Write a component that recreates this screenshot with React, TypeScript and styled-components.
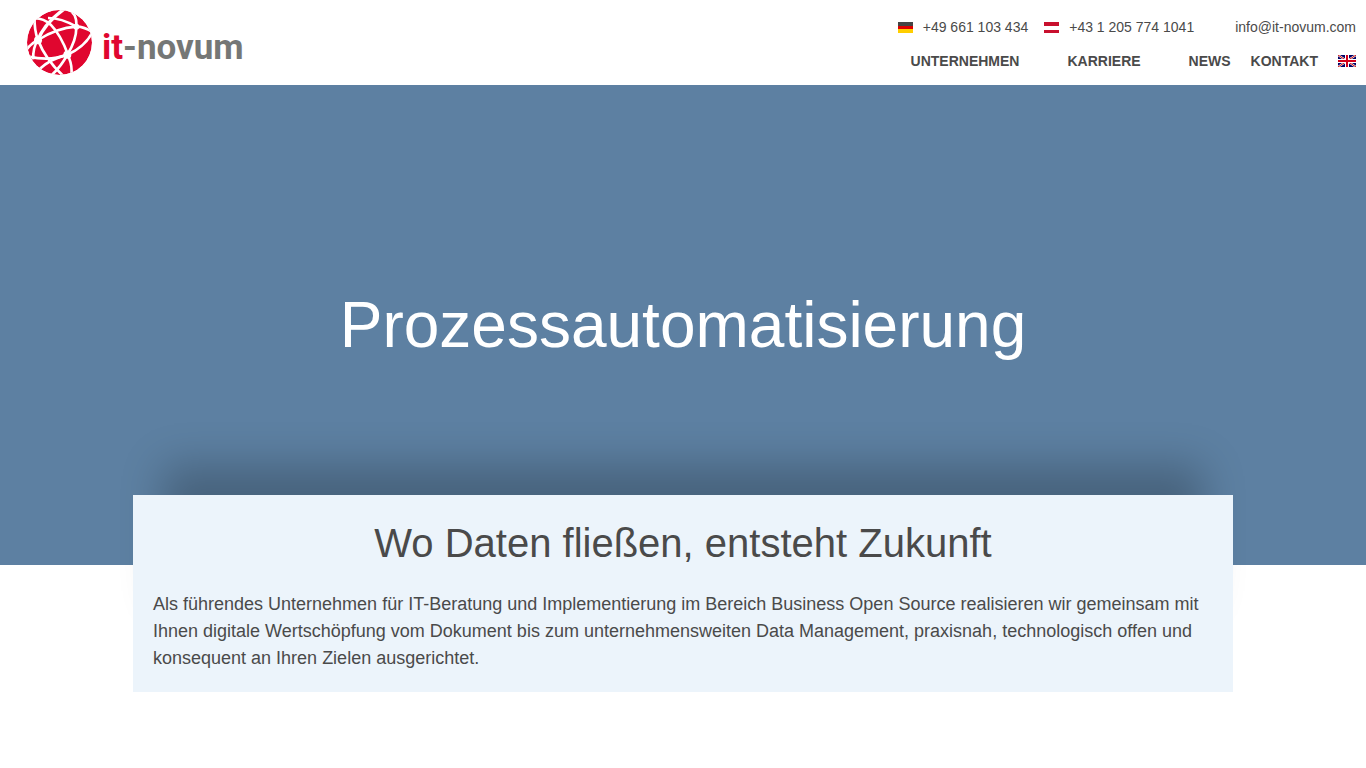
import React from "react";
import styled, { createGlobalStyle } from "styled-components";

const GlobalStyle = createGlobalStyle`
  *, *::before, *::after { box-sizing: border-box; }
  body {
    margin: 0;
    background: #fff;
    color: #4a4a4a;
    font-family: "Liberation Sans", Arial, sans-serif;
    font-size: 18px;
    line-height: 27px;
  }
`;

const Header = styled.header`
  display: flex;
  justify-content: space-between;
  height: 85px;
  padding: 10px 10px 0 27px;
`;

const Logo = styled.a`
  display: flex;
  align-items: flex-start;
  gap: 10px;
  height: 65px;
  text-decoration: none;
`;

const Wordmark = styled.span`
  color: #757776;
  font-family: Roboto, "Liberation Sans", sans-serif;
  font-size: 35px;
  font-weight: 700;
  line-height: 76px;
`;

const WordmarkAccent = styled.span`
  color: #e0062f;
`;

const HeaderLinks = styled.div`
  display: flex;
  flex-direction: column;
  align-items: flex-end;
`;

const LinkRow = styled.div`
  display: flex;
  align-items: center;
  height: 34px;
`;

const NavRow = styled(LinkRow).attrs({ as: "nav" })``;

const ContactLink = styled.a<{ $gap?: number }>`
  display: flex;
  align-items: center;
  gap: 10px;
  margin-left: ${({ $gap = 0 }) => $gap}px;
  color: inherit;
  font-size: 14px;
  text-decoration: none;
`;

const NavLink = styled(ContactLink)`
  font-weight: 700;
`;

const Hero = styled.section`
  display: flex;
  align-items: center;
  justify-content: center;
  height: 480px;
  background: #5d80a2;
`;

const HeroTitle = styled.h1`
  margin: 0;
  color: #fff;
  font-size: 64px;
  font-weight: 400;
  line-height: 78px;
`;

const Intro = styled.section`
  position: relative;
  max-width: 1100px;
  margin: -70px auto 0;
  padding: 20px;
  background: #ecf4fb;
  box-shadow: 0 -60px 40px -30px rgba(0, 0, 0, 0.23);
`;

const IntroTitle = styled.h2`
  margin: 0 0 20px;
  font-size: 40px;
  font-weight: 400;
  line-height: 56px;
  text-align: center;
`;

const IntroText = styled.p`
  margin: 0;
`;

const Globe = () => (
  <svg width="65" height="65" viewBox="21 18 195 195" aria-hidden="true">
    <clipPath id="globe">
      <circle cx="118.500" cy="115.500" r="97.500" />
    </clipPath>
    <g clipPath="url(#globe)">
      <circle cx="118.500" cy="115.500" r="97.500" fill="#e0062f" />
      <g fill="none" stroke="#fff" strokeWidth="8">
        <path d="M16 142Q30 120 54 108Q110 72 169 68Q196 68 222 88" />
        <path d="M52 112Q72 58 134 14" strokeWidth="10" />
        <path d="M32 44Q66 38 92 62Q122 92 144 152" />
        <path d="M84 42Q124 42 169 68" />
        <path d="M140 12Q172 26 169 68Q170 108 142 152Q122 190 92 216" />
        <path d="M54 110Q42 74 44 40" />
        <path d="M54 108Q76 166 130 216" />
        <path d="M26 158Q92 172 142 152Q194 130 218 84" />
        <path d="M142 152Q92 164 58 196" />
        <path d="M54 108Q38 130 40 166" />
        <path d="M142 152Q158 180 154 214" />
      </g>
      <g fill="#fff">
        <circle cx="54" cy="109" r="12" />
        <circle cx="142" cy="152" r="12" />
        <circle cx="169" cy="68" r="9" />
      </g>
    </g>
  </svg>
);

const GermanFlag = () => (
  <svg width="15" height="11" viewBox="0 0 15 11" aria-hidden="true">
    <rect width="15" height="4" fill="#444" />
    <rect y="4" width="15" height="4" fill="#d00" />
    <rect y="7" width="15" height="4" fill="#ffce00" />
  </svg>
);

const AustrianFlag = () => (
  <svg width="15" height="11" viewBox="0 0 15 11" aria-hidden="true">
    <rect width="15" height="11" fill="#c8102e" />
    <rect y="4" width="15" height="4" fill="#fff" />
  </svg>
);

const BritishFlag = () => (
  <svg width="18" height="12" viewBox="0 0 18 12" role="img" aria-label="English">
    <rect width="18" height="12" fill="#006" />
    <path d="M0 0L18 12M18 0L0 12" stroke="#fff" strokeWidth="2" />
    <path d="M0 0L18 12M18 0L0 12" stroke="#c00" strokeWidth="1" />
    <path d="M9 0V12M0 6H18" stroke="#fff" strokeWidth="4" />
    <path d="M9 0V12M0 6H18" stroke="#d4001a" strokeWidth="2" />
  </svg>
);

export default function App() {
  return (
    <>
      <GlobalStyle />
      <Header>
        <Logo href="#" aria-label="it-novum">
          <Globe />
          <Wordmark>
            <WordmarkAccent>it</WordmarkAccent>-novum
          </Wordmark>
        </Logo>
        <HeaderLinks>
          <LinkRow>
            <ContactLink href="tel:+49661103434">
              <GermanFlag />
              +49 661 103 434
            </ContactLink>
            <ContactLink href="tel:+4312057741041" $gap={16}>
              <AustrianFlag />
              +43 1 205 774 1041
            </ContactLink>
            <ContactLink href="mailto:info@it-novum.com" $gap={41}>
              info@it-novum.com
            </ContactLink>
          </LinkRow>
          <NavRow>
            <NavLink href="#">UNTERNEHMEN</NavLink>
            <NavLink href="#" $gap={48}>KARRIERE</NavLink>
            <NavLink href="#" $gap={48}>NEWS</NavLink>
            <NavLink href="#" $gap={20}>KONTAKT</NavLink>
            <NavLink href="#" $gap={20}>
              <BritishFlag />
            </NavLink>
          </NavRow>
        </HeaderLinks>
      </Header>
      <main>
        <Hero>
          <HeroTitle>Prozessautomatisierung</HeroTitle>
        </Hero>
        <Intro>
          <IntroTitle>Wo Daten fließen, entsteht Zukunft</IntroTitle>
          <IntroText>
            Als führendes Unternehmen für IT-Beratung und Implementierung im Bereich Business Open
            Source realisieren wir gemeinsam mit Ihnen digitale Wertschöpfung vom Dokument bis zum
            unternehmensweiten Data Management, praxisnah, technologisch offen und konsequent an
            Ihren Zielen ausgerichtet.
          </IntroText>
        </Intro>
      </main>
    </>
  );
}
